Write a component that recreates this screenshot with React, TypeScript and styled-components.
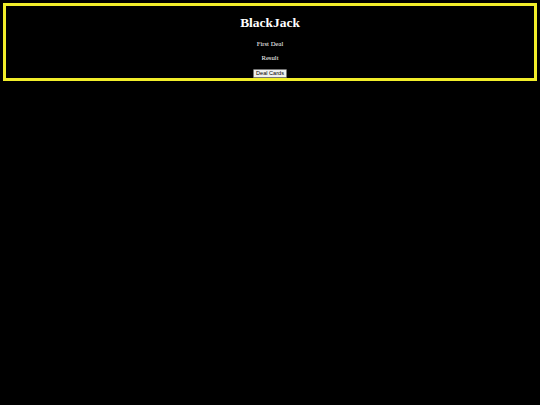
import React from "react";
import styled, { createGlobalStyle } from "styled-components";

const Global = createGlobalStyle`
  html, body { background: #000; }
  body { margin: 3.36px; font-family: "Liberation Serif", "Times New Roman", serif; color: #fff; }
`;

const Table = styled.div`
  border: 3px solid #f2ee2a;
  text-align: center;
  display: flow-root;
  font-size: 6.72px;
  line-height: 1.15;
`;

const Title = styled.h1`
  font-size: 13.44px;
  font-weight: bold;
  margin: 9px 0;
`;

const Line = styled.p`
  font-size: 6.72px;
  margin: 6.72px 0;
`;

const Button = styled.button`
  font-family: "Liberation Sans", Arial, sans-serif;
  font-size: 5.6px;
  line-height: 1.15;
  padding: 0.6px 2.5px;
  margin: 0;
  border: 0.5px solid #767676;
  border-radius: 1px;
  background: #efefef;
  color: #000;
  display: inline-block;
  vertical-align: bottom;
`;

export default function App() {
  return (
    <>
      <Global />
      <Table>
        <Title>BlackJack</Title>
        <Line>First Deal</Line>
        <Line>Result</Line>
        <Button>Deal Cards</Button>
      </Table>
    </>
  );
}
